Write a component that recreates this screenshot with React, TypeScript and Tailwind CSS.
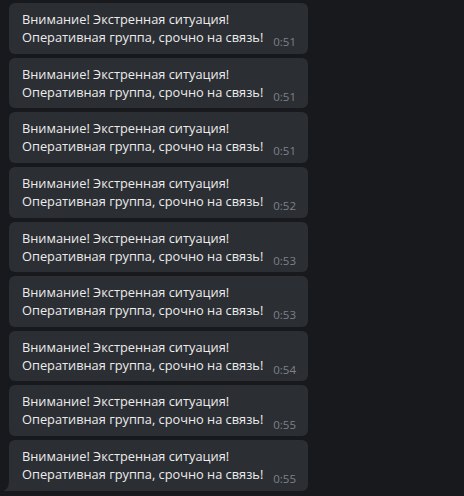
import React from 'react';

const messages = ['0:51', '0:51', '0:51', '0:52', '0:53', '0:53', '0:54', '0:55', '0:55'];

const Tail: React.FC = () => (
  <svg className="absolute -left-[6px] bottom-0" width="10" height="12" viewBox="0 0 10 12">
    <path d="M10 0 V12 H0 C4 10.5 6 8 6 0 Z" fill="#2b2e33" />
  </svg>
);

const Bubble: React.FC<{ time: string; last: boolean }> = ({ time, last }) => (
  <div
    className={`relative flex items-end w-[299px] h-[50.625px] bg-[#2b2e33] pl-[13px] pr-[12px] pt-[7px] ${
      last ? 'rounded-t-[6px] rounded-br-[6px]' : 'rounded-[6px]'
    }`}
  >
    <div className="self-start text-[12.8px] leading-[18px] text-[#ececec]">
      <div>Внимание! Экстренная ситуация!</div>
      <div>Оперативная группа, срочно на связь!</div>
    </div>
    <span className="ml-auto mb-[6px] text-[11.5px] leading-none text-[#7d8288]">{time}</span>
    {last && <Tail />}
  </div>
);

export default function App() {
  return (
    <div
      className="w-[464px] h-[496px] bg-[#18191d] overflow-hidden pt-[3px] pl-[9px] flex flex-col gap-[4px]"
      style={{ fontFamily: '"Open Sans", sans-serif' }}
    >
      {messages.map((t, i) => (
        <Bubble key={i} time={t} last={i === messages.length - 1} />
      ))}
    </div>
  );
}
